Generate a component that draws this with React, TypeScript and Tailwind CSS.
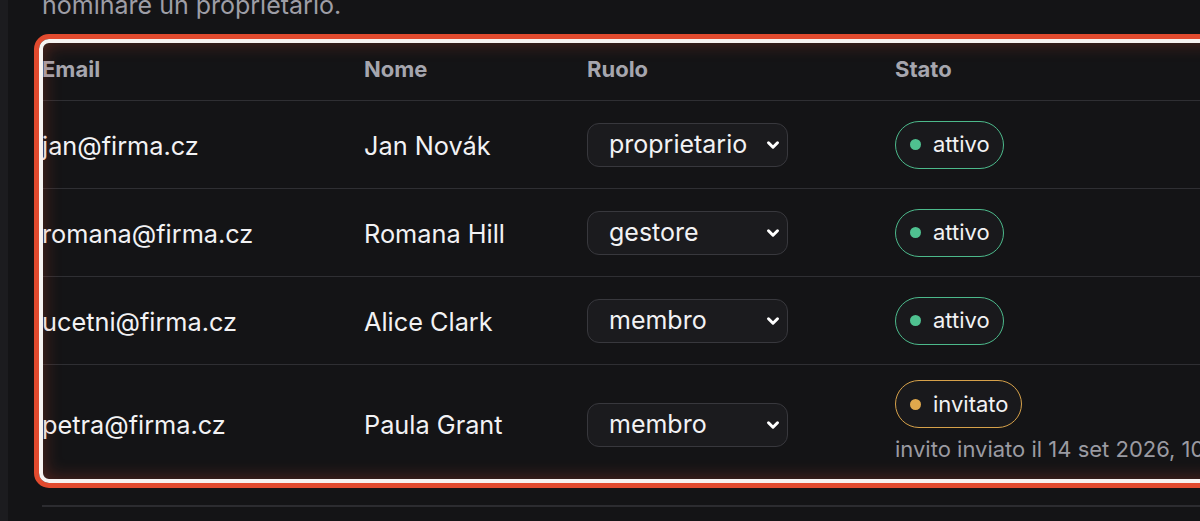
import { ChevronDown } from "lucide-react"

type Member = {
  email: string
  name: string
  role: string
  status: "attivo" | "invitato"
  note?: string
}

const members: Member[] = [
  { email: "jan@firma.cz", name: "Jan Novák", role: "proprietario", status: "attivo" },
  { email: "romana@firma.cz", name: "Romana Hill", role: "gestore", status: "attivo" },
  { email: "ucetni@firma.cz", name: "Alice Clark", role: "membro", status: "attivo" },
  {
    email: "petra@firma.cz",
    name: "Paula Grant",
    role: "membro",
    status: "invitato",
    note: "invito inviato il 14 set 2026, 10:32",
  },
]

const roles = ["proprietario", "gestore", "membro"]

const cols = "grid grid-cols-[322px_223px_308px_1fr] items-center"

function StatusBadge({ status }: { status: Member["status"] }) {
  const active = status === "attivo"
  return (
    <span
      className={
        active
          ? "inline-flex h-[48px] items-center gap-[12px] rounded-full border-[1.5px] border-[#4cb98b] bg-[#19191c] pl-[14px] pr-[13px] text-[22px] text-[#f2f2f4]"
          : "inline-flex h-[48px] items-center gap-[12px] rounded-full border-[1.5px] border-[#d6a14a] bg-[#19191c] pl-[14px] pr-[12px] text-[22px] text-[#f2f2f4]"
      }
    >
      <span className={active ? "h-[11px] w-[11px] rounded-full bg-[#4fc190]" : "h-[11px] w-[11px] rounded-full bg-[#e0a84c]"} />
      {status}
    </span>
  )
}

function RoleSelect({ value }: { value: string }) {
  return (
    <div className="relative w-[201px]">
      <select
        defaultValue={value}
        className="h-[44px] w-full appearance-none rounded-[12px] border border-[#38383d] bg-[#1b1b1e] pl-[21px] text-[25px] text-[#f2f2f4] outline-none"
      >
        {roles.map((r) => (
          <option key={r} value={r}>
            {r}
          </option>
        ))}
      </select>
      <ChevronDown
        className="pointer-events-none absolute right-[6px] top-1/2 h-[18px] w-[18px] -translate-y-1/2 text-white"
        strokeWidth={4}
      />
    </div>
  )
}

export default function App() {
  return (
    <div className="flex h-[521px] w-[1200px] overflow-hidden bg-[#141416] font-['Inter',sans-serif]">
      <div className="w-2 shrink-0 bg-[#1c1c1f]" />
      <main className="min-w-0 flex-1 pl-[34px]">
        <p className="-mt-[11px] whitespace-nowrap text-[25px] leading-[33px] text-[#9e9ea6]">
          nominare un proprietario.
        </p>

        <div className="relative mt-[16px]">
          <div className={`${cols} h-[63px] border-b border-[#2f2f33] text-[22px] font-bold text-[#a6a6ae]`}>
            <div>Email</div>
            <div>Nome</div>
            <div>Ruolo</div>
            <div>Stato</div>
          </div>

          {members.map((m, i) => (
            <div
              key={m.email}
              className={
                i === members.length - 1
                  ? `${cols} h-[118px] text-[25.3px] text-[#f2f2f4]`
                  : `${cols} h-[88px] border-b border-[#2f2f33] text-[25.3px] text-[#f2f2f4]`
              }
            >
              <div className="whitespace-nowrap pt-[2px]">{m.email}</div>
              <div className="whitespace-nowrap pt-[2px]">{m.name}</div>
              <div className="pt-[1px]">
                <RoleSelect value={m.role} />
              </div>
              <div className={m.note ? "mb-[8px] flex flex-col items-start gap-[10px]" : "flex flex-col items-start"}>
                <StatusBadge status={m.status} />
                {m.note && (
                  <span className="whitespace-nowrap text-[22px] leading-none text-[#9b9ba2]">{m.note}</span>
                )}
              </div>
            </div>
          ))}

          {/* focus highlight around the table */}
          <div className="pointer-events-none absolute -bottom-[5px] -left-2 -right-10 -top-1 rounded-[15px] border-[5px] border-[#e24b2f]">
            <div className="h-full w-full rounded-[10px] border-4 border-[#f7f3f1] shadow-[inset_0_0_18px_rgba(226,75,47,0.32)]" />
          </div>
        </div>

        <div className="mt-[22px] h-[2px] bg-[#2c2c30]" />
      </main>
    </div>
  )
}
